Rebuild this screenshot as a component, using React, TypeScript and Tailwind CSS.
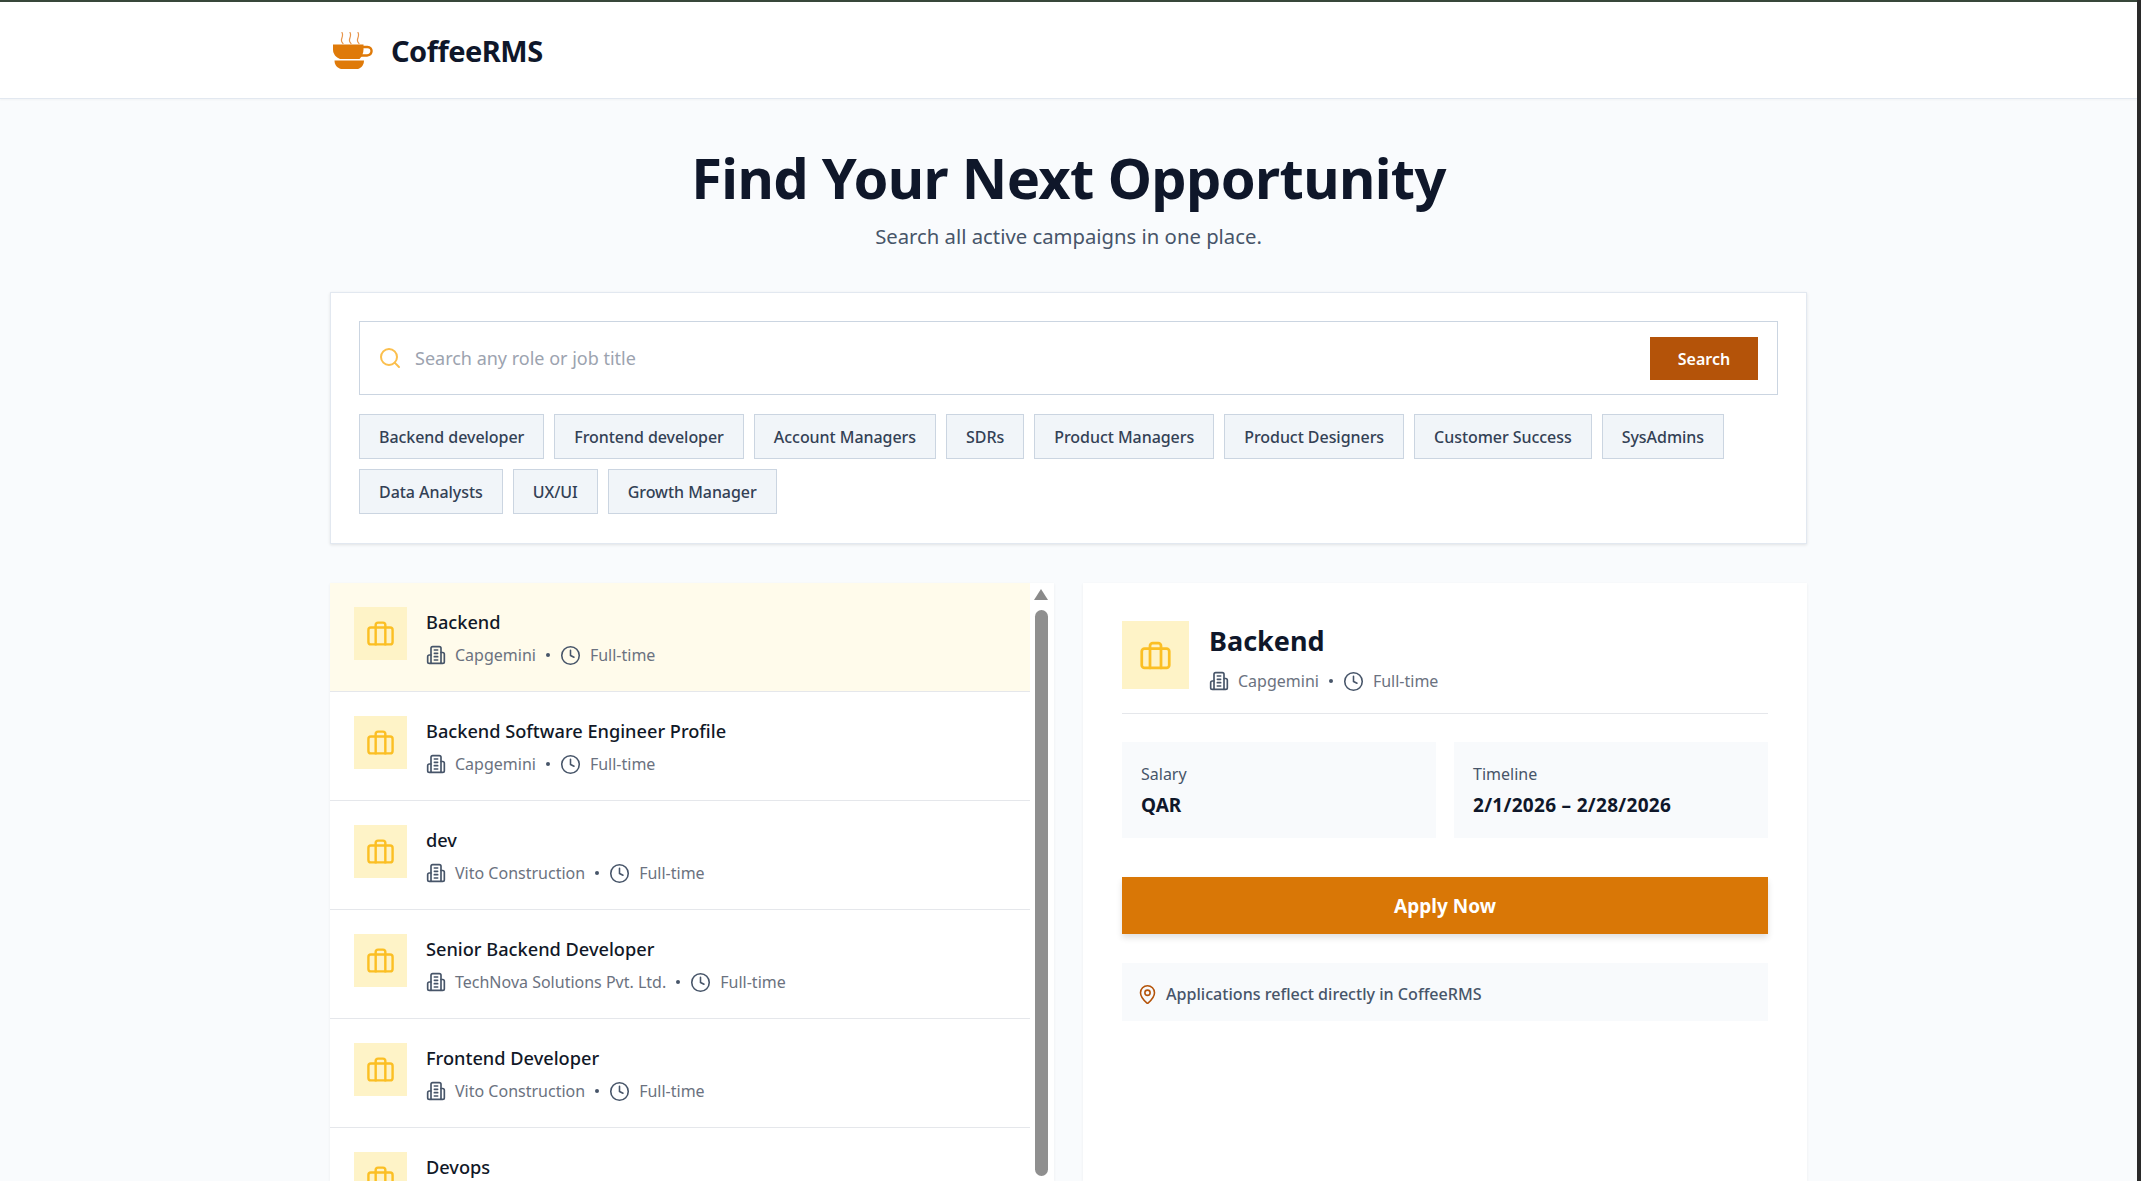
import React from "react";
import { Search, Clock, MapPin } from "lucide-react";

const font = "font-['Noto_Sans',sans-serif]";

function Suitcase({ className }: { className: string }) {
  return (
    <svg viewBox="0 0 24 24" fill="none" stroke="currentColor" strokeWidth="2" strokeLinecap="round" strokeLinejoin="round" className={className}>
      <rect x="2" y="7" width="20" height="14" rx="2" />
      <path d="M16 21V5a2 2 0 0 0-2-2h-4a2 2 0 0 0-2 2v16" />
    </svg>
  );
}

function Building({ className }: { className: string }) {
  return (
    <svg viewBox="0 0 24 24" fill="none" stroke="currentColor" strokeWidth="2" strokeLinecap="round" strokeLinejoin="round" className={className}>
      <path d="M6 22V4a2 2 0 0 1 2-2h8a2 2 0 0 1 2 2v18Z" />
      <path d="M6 12H4a2 2 0 0 0-2 2v6a2 2 0 0 0 2 2h2" />
      <path d="M18 9h2a2 2 0 0 1 2 2v9a2 2 0 0 1-2 2h-2" />
      <path d="M10 6h4M10 10h4M10 14h4M10 18h4" />
    </svg>
  );
}

function CoffeeLogo() {
  return (
    <svg viewBox="0 0 41 37" className="h-[37px] w-[41px] shrink-0" fill="none">
      <path d="M10 11.5C5.500 8 11.500 5 9 .5 M18 11.5C13.500 8 19.500 5 17 .5 M26 11.5C21.500 8 27.500 5 25 .5" stroke="#e8954a" strokeWidth="1.2" strokeLinecap="round" />
      <path d="M0 12.5h30.5v5c0 3.5-1.5 7-4 9.5H7c-4-1.5-7-5-7-9.5z" fill="#df7a09" />
      <path d="M30 15h4.500c5.500 0 5.500 8-.5 8.500h-6" stroke="#df7a09" strokeWidth="2.4" />
      <path d="M1.500 28.500h29.500c0 4-2.500 7.500-6 8.500H8c-4-1-6.500-4.500-6.500-8.500z" fill="#df7a09" />
    </svg>
  );
}

function Meta({ company }: { company: string }) {
  return (
    <div className="flex items-center text-[16px] leading-[24px] text-[#6b7280]">
      <Building className="h-[20px] w-[20px] text-[#475569]" />
      <span className="ml-[9px]">{company}</span>
      <span className="mx-[10px] h-[4px] w-[4px] rounded-full bg-[#475569]" />
      <Clock className="h-[21px] w-[21px] text-[#475569]" strokeWidth={1.8} />
      <span className="ml-[9px]">Full-time</span>
    </div>
  );
}

const chips = ["Backend developer", "Frontend developer", "Account Managers", "SDRs", "Product Managers", "Product Designers", "Customer Success", "SysAdmins", "Data Analysts", "UX/UI", "Growth Manager"];

const jobs = [
  ["Backend", "Capgemini"],
  ["Backend Software Engineer Profile", "Capgemini"],
  ["dev", "Vito Construction"],
  ["Senior Backend Developer", "TechNova Solutions Pvt. Ltd."],
  ["Frontend Developer", "Vito Construction"],
  ["Devops", "Vito Construction"],
];

export default function App() {
  return (
    <div className={`${font} flex h-[1181px] w-full overflow-hidden bg-[#f9fbfd]`}>
      <div className="flex min-w-0 flex-1 flex-col">
        <div className="h-[2px] shrink-0 bg-[#38473a]" />
        <header className="h-[97px] shrink-0 border-b border-[#e2e8f0] bg-white shadow-[0_1px_2px_rgba(0,0,0,0.04)]">
          <div className="mx-auto flex h-full w-[1477px] items-center gap-[17px] pl-[3px]">
            <CoffeeLogo />
            <span className="text-[29px] font-bold leading-none tracking-[-0.5px] text-[#0f172a]">CoffeeRMS</span>
          </div>
        </header>

        <main className="mx-auto flex w-[1477px] flex-col">
          <h1 className="mt-[46px] text-center text-[56px] font-bold leading-[64px] tracking-[-0.65px] text-[#0f172a]">Find Your Next Opportunity</h1>
          <p className="mt-[13px] text-center text-[20.3px] leading-[28px] text-[#475569]">Search all active campaigns in one place.</p>

          <section className="mt-[42px] h-[252px] border border-[#e2e8f0] bg-white p-[28px] shadow-[0_1px_3px_rgba(0,0,0,0.1)]">
            <div className="flex h-[74px] items-center border border-[#cbd5e1] bg-white pl-[18px] pr-[19px]">
              <Search className="h-[24px] w-[24px] shrink-0 text-[#fbbf4d]" strokeWidth={2} />
              <span className="ml-[13px] flex-1 text-[18px] text-[#9ca3af]">Search any role or job title</span>
              <button className="h-[43px] w-[108px] bg-[#b45309] pt-[1px] text-[16px] font-semibold text-white">Search</button>
            </div>
            <div className="mt-[19px] flex flex-wrap gap-x-[10px] gap-y-[10px]">
              {chips.map((c) => (
                <span key={c} className="flex h-[45px] items-center border border-[#cbd5e1] bg-[#f1f5f9] px-[19px] text-[16px] font-medium tracking-[-0.05px] text-[#334155]">{c}</span>
              ))}
            </div>
          </section>

          <div className="mt-[39px] flex items-start gap-[29px]">
            <section className="flex h-[598px] w-[724px] shrink-0 bg-white shadow-[0_1px_3px_rgba(0,0,0,0.06)]">
              <div className="min-w-0 flex-1">
                {jobs.map(([title, company], i) => (
                  <div key={title} className={`flex h-[109px] gap-[19px] border-b border-[#e5e7eb] px-[24px] pt-[24px] ${i === 0 ? "bg-[#fffbeb]" : "bg-white"}`}>
                    <div className="flex h-[53px] w-[53px] shrink-0 items-center justify-center bg-[#fef3c7]">
                      <Suitcase className="h-[29px] w-[29px] text-[#fbbf24]" />
                    </div>
                    <div className="pt-[1px]">
                      <div className="text-[18.2px] font-medium leading-[28px] text-[#111827]">{title}</div>
                      <div className="mt-[7px]"><Meta company={company} /></div>
                    </div>
                  </div>
                ))}
              </div>
              <div className="flex w-[24px] shrink-0 flex-col items-end pr-[6px] pt-[6px]">
                <div className="h-0 w-0 border-x-[7px] border-b-[11px] border-x-transparent border-b-[#8a8a8a]" />
                <div className="mt-[10px] h-[566px] w-[13px] shrink-0 rounded-full bg-[#8f8f8f]" />
              </div>
            </section>

            <section className="h-[598px] flex-1 bg-white px-[39px] pt-[38px] shadow-[0_1px_3px_rgba(0,0,0,0.06)]">
              <div className="flex h-[93px] gap-[20px] border-b border-[#e5e7eb]">
                <div className="flex h-[68px] w-[67px] shrink-0 items-center justify-center bg-[#fef3c7]">
                  <Suitcase className="h-[33px] w-[33px] text-[#fbbf24]" />
                </div>
                <div>
                  <h2 className="text-[27px] font-bold leading-[40px] text-[#0f172a]">Backend</h2>
                  <div className="mt-[8px]"><Meta company="Capgemini" /></div>
                </div>
              </div>
              <div className="mt-[28px] grid grid-cols-2 gap-[18px]">
                <div className="h-[96px] bg-[#f8fafc] px-[19px] pt-[20px]">
                  <div className="text-[16px] leading-[24px] text-[#475569]">Salary</div>
                  <div className="mt-[7px] text-[19px] font-bold leading-[24px] text-[#0f172a]">QAR</div>
                </div>
                <div className="h-[96px] bg-[#f8fafc] px-[19px] pt-[20px]">
                  <div className="text-[16px] leading-[24px] text-[#475569]">Timeline</div>
                  <div className="mt-[7px] text-[19px] font-bold leading-[24px] tracking-[0.3px] text-[#0f172a]">2/1/2026 – 2/28/2026</div>
                </div>
              </div>
              <button className="mt-[39px] h-[57px] w-full bg-[#d97706] pt-[1px] text-[19px] font-bold text-white shadow-[0_4px_6px_rgba(0,0,0,0.12)]">Apply Now</button>
              <div className="mt-[29px] flex h-[58px] items-center gap-[8px] bg-[#f8fafc] px-[15px] pt-[4px]">
                <MapPin className="h-[21px] w-[21px] text-[#b45309]" strokeWidth={1.8} />
                <span className="text-[16.1px] font-medium text-[#475569]">Applications reflect directly in CoffeeRMS</span>
              </div>
            </section>
          </div>
        </main>
      </div>
      <div className="w-[4px] shrink-0 bg-[#2a2a2a]" />
    </div>
  );
}
